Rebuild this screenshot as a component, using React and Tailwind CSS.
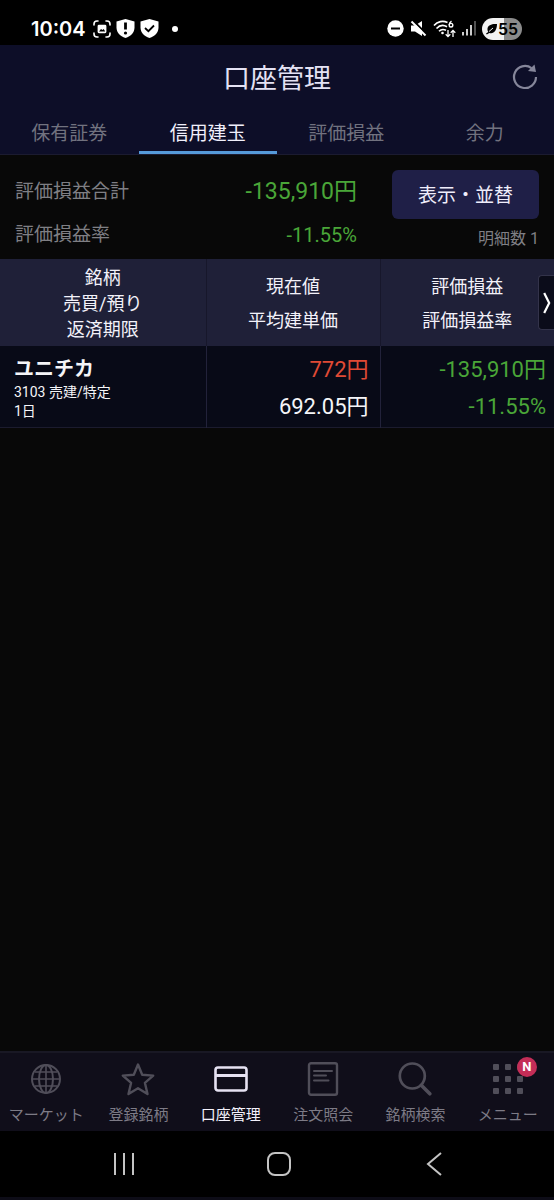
import { useState } from "react";

const tabs = ["保有証券", "信用建玉", "評価損益", "余力"];

const positions = [
  {
    code: "3103",
    name: "ユニチカ",
    type: "売建/特定",
    limit: "1日",
    price: "772円",
    average: "692.05円",
    profit: "-135,910円",
    rate: "-11.55%",
  },
];

const GlobeIcon = () => (
  <svg width="34" height="34" viewBox="0 0 34 34" fill="none" stroke="currentColor" strokeWidth="2">
    <circle cx="17" cy="17" r="14" />
    <ellipse cx="17" cy="17" rx="7" ry="14" />
    <path d="M17 3v28M3 17h28M6 10h22M6 24h22" strokeWidth="1.6" />
  </svg>
);

const StarIcon = () => (
  <svg width="34" height="34" viewBox="0 0 34 34" fill="none" stroke="currentColor" strokeWidth="2.4" strokeLinejoin="round">
    <path d="M17 2.5l4.2 10.2 11 .9-8.3 7.2 2.6 11.2L17 26.2 7.5 32l2.6-11.2-8.3-7.2 11-.9z" />
  </svg>
);

const CardIcon = () => (
  <svg width="34" height="34" viewBox="0 0 34 34" fill="none" stroke="currentColor" strokeWidth="2.6">
    <rect x="1.5" y="5.5" width="31" height="23" rx="2.5" />
    <path d="M1.5 13.5h31" strokeWidth="3" />
  </svg>
);

const OrderIcon = () => (
  <svg width="34" height="34" viewBox="0 0 34 34" fill="none" stroke="currentColor" strokeWidth="2.4">
    <rect x="3" y="1.2" width="28" height="31.6" rx="2" />
    <path d="M8 9h18M8 13.5h12M8 18.5h14.5" strokeWidth="2" strokeLinecap="round" />
  </svg>
);

const SearchIcon = () => (
  <svg width="34" height="34" viewBox="0 0 34 34" fill="none" stroke="currentColor">
    <circle cx="14.3" cy="14" r="12.5" strokeWidth="2.7" />
    <path d="M23.3 23.3l8.5 8.5" strokeWidth="3.6" strokeLinecap="round" />
  </svg>
);

const MenuIcon = () => (
  <svg width="34" height="34" viewBox="0 0 34 34" fill="currentColor">
    {[2, 14, 26].map((y) =>
      [2, 14, 26].map((x) => (
        <rect key={`${x}-${y}`} x={x} y={y} width="6" height="6" rx="1" />
      ))
    )}
  </svg>
);

const menus = [
  { label: "マーケット", icon: GlobeIcon },
  { label: "登録銘柄", icon: StarIcon },
  { label: "口座管理", icon: CardIcon },
  { label: "注文照会", icon: OrderIcon },
  { label: "銘柄検索", icon: SearchIcon },
  { label: "メニュー", icon: MenuIcon, badge: "N" },
];

const StatusBar = () => (
  <div className="h-[45px] shrink-0 bg-black text-white flex items-center justify-between pl-[31px] pr-8 pt-3">
    <div className="flex items-center gap-[5px]">
      <span className="font-[Inter] text-[20px] leading-8 font-semibold mr-[2px]">10:04</span>
      <svg width="18" height="18" viewBox="0 0 18 18" fill="none" stroke="currentColor" strokeWidth="1.6" strokeLinecap="round">
        <path d="M1 5V4a3 3 0 0 1 3-3h1M13 1h1a3 3 0 0 1 3 3v1M17 13v1a3 3 0 0 1-3 3h-1M5 17H4a3 3 0 0 1-3-3v-1" />
        <path
          fillRule="evenodd"
          d="M6 4.8h6A1.4 1.4 0 0 1 13.4 6.2v5.6a1.4 1.4 0 0 1-1.4 1.4H6a1.4 1.4 0 0 1-1.4-1.4V6.2A1.4 1.4 0 0 1 6 4.8zM6 11.5l2-2.5 1.5 1 1.2-1 1.5 2.5z"
          fill="currentColor"
          stroke="none"
        />
      </svg>
      <svg width="19" height="19" viewBox="0 0 19 19">
        <path d="M9.5 0l9 2.5v6c0 5-3.5 8.7-9 10.5C4 17.2.5 13.5.5 8.5v-6z" fill="currentColor" />
        <path d="M9.5 3.5v7" stroke="#000" strokeWidth="2.8" />
        <circle cx="9.5" cy="14" r="1.6" fill="#000" />
      </svg>
      <svg width="19" height="19" viewBox="0 0 19 19">
        <path d="M9.5 0l9 2.5v6c0 5-3.5 8.7-9 10.5C4 17.2.5 13.5.5 8.5v-6z" fill="currentColor" />
        <path d="M5 9l3.4 3.2L14 6.5" fill="none" stroke="#000" strokeWidth="1.8" />
      </svg>
      <span className="w-[6px] h-[6px] rounded-full bg-white ml-2"></span>
    </div>
    <div className="flex items-center gap-[6px]">
      <svg width="17" height="17" viewBox="0 0 17 17">
        <circle cx="8.5" cy="8.5" r="8.2" fill="currentColor" />
        <path d="M4 8.5h9" stroke="#000" strokeWidth="2" />
      </svg>
      <svg width="17" height="17" viewBox="0 0 17 17">
        <path d="M1 5.5h4L12 1v15l-7-4.5H1z" fill="currentColor" />
        <path d="M3 .5l14 14" stroke="#000" strokeWidth="2" />
        <path d="M1.5 1.5l14 14" stroke="currentColor" strokeWidth="2" />
      </svg>
      <svg width="23" height="18" viewBox="0 0 23 18" fill="none" stroke="currentColor" strokeWidth="1.6">
        <path d="M1 5.5c3.5-4.2 9-5.2 13.5-3M3.5 8.5c3-3.2 7-3.8 10.5-1.7M6 11.3c2-2 4.5-2.3 7-1" />
        <circle cx="9.5" cy="13" r="1.3" fill="currentColor" stroke="none" />
        <path d="M18.5 1.2c-1.7 1-2.3 2.4-2.3 3.8" strokeWidth="1.4" />
        <circle cx="18" cy="5.2" r="1.8" strokeWidth="1.4" />
        <path d="M15 10v6.5M12.7 14.3l2.3 2.3 2.3-2.3M20 17v-6.5M17.7 12.7L20 10.4l2.3 2.3" strokeWidth="1.3" />
      </svg>
      <svg width="14" height="15" viewBox="0 0 14 15" stroke="currentColor" strokeWidth="1.6">
        <path d="M1 11v3.5M5 8v6.5M9 4v10.5" />
        <path d="M13 0v14.5" stroke="#666" />
      </svg>
      <div className="w-10 h-[22px] rounded-full bg-linear-to-r from-[#f2f2f2] from-55% to-[#8b8b8b] to-55% flex items-center justify-center text-black">
        <svg width="12" height="12" viewBox="0 0 12 12">
          <path d="M11 1C6 .5 2 2 1.5 5.5c-.2 1.500.2 2.600.8 3.500L0 10.500l.8 1 2.500-1.600C7.500 11.500 11 7.500 11 1z" fill="currentColor" />
          <path d="M3 8.5l4-3.5" stroke="#f2f2f2" />
        </svg>
        <span className="font-[Inter] text-[16px] leading-5 font-semibold">55</span>
      </div>
    </div>
  </div>
);

const Header = ({ active, onChange }) => (
  <header className="bg-[#0d0e28] border-b border-[#1b1b30]">
    <div className="relative h-16 flex items-center justify-center">
      <h1 className="pt-[3px] text-[27px] leading-9 text-[#e4e2f4]">口座管理</h1>
      <button type="button" aria-label="更新" className="absolute right-[15px] top-[18px] text-[#85869a]">
        <svg width="28" height="28" viewBox="0 0 28 28" fill="none" stroke="currentColor" strokeWidth="2.2">
          <path d="M25 14A11 11 0 1 1 20.5 5.1" />
          <path d="M23.5 1.5l1.5 7.5-8-1z" fill="currentColor" stroke="none" />
        </svg>
      </button>
    </div>
    <nav className="grid grid-cols-4">
      {tabs.map((tab) => (
        <button
          key={tab}
          type="button"
          onClick={() => onChange(tab)}
          className={`h-[45px] pt-[7px] border-b-3 text-[19px] leading-6 ${
            active === tab
              ? "border-[#559ad9] text-[#f0effb]"
              : "border-transparent text-[#71727f]"
          }`}
        >
          {tab}
        </button>
      ))}
    </nav>
  </header>
);

const Summary = () => (
  <section className="flex justify-between px-[15px] pt-[15px] h-[104px]">
    <dl className="grow flex flex-col gap-[15px] pt-[6px] pr-[35px]">
      <div className="flex items-center justify-between h-8">
        <dt className="text-[19px] leading-7 text-[#7f7f84]">評価損益合計</dt>
        <dd className="text-[23px] leading-8 text-[#4aa638]">-135,910円</dd>
      </div>
      <div className="flex items-center justify-between h-6">
        <dt className="text-[19px] leading-6 text-[#7f7f84]">評価損益率</dt>
        <dd className="text-[20px] leading-6 text-[#4aa638]">-11.55%</dd>
      </div>
    </dl>
    <div className="w-[147px] flex flex-col gap-2">
      <button type="button" className="h-[49px] pt-[3px] rounded-md bg-[#1f1f47] text-[19px] leading-6 text-[#efedfb]">
        表示・並替
      </button>
      <p className="text-right text-[16px] leading-6 text-[#7f7f84]">明細数 1</p>
    </div>
  </section>
);

const PositionTable = () => (
  <div className="relative">
    <table className="w-full table-fixed border-collapse">
      <thead>
        <tr className="h-[87px] bg-[#1f2038] text-[18px] text-[#f3f2fa]">
          <th className="w-[206px] p-0 pt-[3px] font-normal leading-[26px] border-r border-[#17172b]">
            銘柄
            <br />
            売買/預り
            <br />
            返済期限
          </th>
          <th className="p-0 pt-[3px] font-normal leading-[34px] border-r border-[#17172b]">
            現在値
            <br />
            平均建単価
          </th>
          <th className="p-0 pt-[3px] font-normal leading-[34px]">
            評価損益
            <br />
            評価損益率
          </th>
        </tr>
      </thead>
      <tbody>
        {positions.map((item) => (
          <tr key={item.code} className="h-[81px] bg-[#080a17] border-b border-[#1b1b2e] text-[22px] leading-[37px]">
            <td className="p-0 pt-1 pl-[14px] border-r border-[#22223a] text-[#f5f5f8]">
              <p className="text-[20px] leading-7 font-bold">{item.name}</p>
              <p className="text-[14px] leading-[19px]">
                {item.code} {item.type}
              </p>
              <p className="text-[14px] leading-[19px]">{item.limit}</p>
            </td>
            <td className="p-0 pt-1 pr-[11px] border-r border-[#22223a] text-right text-[#f5f5f8]">
              <p className="text-[#e04a35]">{item.price}</p>
              <p>{item.average}</p>
            </td>
            <td className="p-0 pt-1 pr-2 text-right text-[#4aa638]">
              <p>{item.profit}</p>
              <p>{item.rate}</p>
            </td>
          </tr>
        ))}
      </tbody>
    </table>
    <button
      type="button"
      aria-label="次の項目"
      className="absolute right-0 top-4 w-4 h-[55px] flex items-center justify-center rounded-l-sm border border-r-0 border-[#33334a] bg-[#0b0c1a] text-white"
    >
      <svg width="8" height="22" viewBox="0 0 8 22" fill="none" stroke="currentColor" strokeWidth="2.2">
        <path d="M1.2 1l5 10-5 10" />
      </svg>
    </button>
  </div>
);

const BottomMenu = ({ active, onChange }) => (
  <nav className="h-20 shrink-0 grid grid-cols-6 bg-[#100e1a] border-t-2 border-[#191824]">
    {menus.map(({ label, icon: Icon, badge }) => (
      <button
        key={label}
        type="button"
        onClick={() => onChange(label)}
        className={`flex flex-col items-center pt-[9px] gap-[9px] ${
          active === label ? "text-[#e6e2f2]" : "text-[#504e59]"
        }`}
      >
        <span className="relative">
          <Icon />
          {badge && (
            <span className="absolute -top-[5px] -right-[12px] w-5 h-5 rounded-full bg-[#c42d57] text-white text-[13px] leading-5 font-bold text-center">
              {badge}
            </span>
          )}
        </span>
        <span
          className={`text-[15px] leading-5 whitespace-nowrap ${
            active === label ? "text-[#f3f1fb]" : "text-[#7d7b86]"
          }`}
        >
          {label}
        </span>
      </button>
    ))}
  </nav>
);

const SystemBar = () => (
  <div className="h-[69px] shrink-0 flex justify-center pl-1 bg-black border-b-3 border-[#0d0c17] text-[#c4c4c4]">
    <button type="button" aria-label="履歴" className="w-[28%] flex items-center justify-center">
      <svg width="24" height="24" viewBox="0 0 24 24" stroke="currentColor" strokeWidth="2">
        <path d="M2 1v22M11 1v22M20 1v22" />
      </svg>
    </button>
    <button type="button" aria-label="ホーム" className="w-[28%] flex items-center justify-center">
      <svg width="24" height="24" viewBox="0 0 24 24" fill="none" stroke="currentColor" strokeWidth="2">
        <rect x="1" y="1" width="22" height="22" rx="7" />
      </svg>
    </button>
    <button type="button" aria-label="戻る" className="w-[28%] flex items-center justify-center">
      <svg width="24" height="24" viewBox="0 0 24 24" fill="none" stroke="currentColor" strokeWidth="2">
        <path d="M20 1L7 12l13 11" />
      </svg>
    </button>
  </div>
);

const App = () => {
  const [tab, setTab] = useState("信用建玉");
  const [menu, setMenu] = useState("口座管理");

  return (
    <div className="min-h-screen flex flex-col bg-[#080808] font-[Roboto,'Noto_Sans_CJK_JP',sans-serif]">
      <StatusBar />
      <Header active={tab} onChange={setTab} />
      <main className="grow">
        <Summary />
        <PositionTable />
      </main>
      <BottomMenu active={menu} onChange={setMenu} />
      <SystemBar />
    </div>
  );
};

export default App;
